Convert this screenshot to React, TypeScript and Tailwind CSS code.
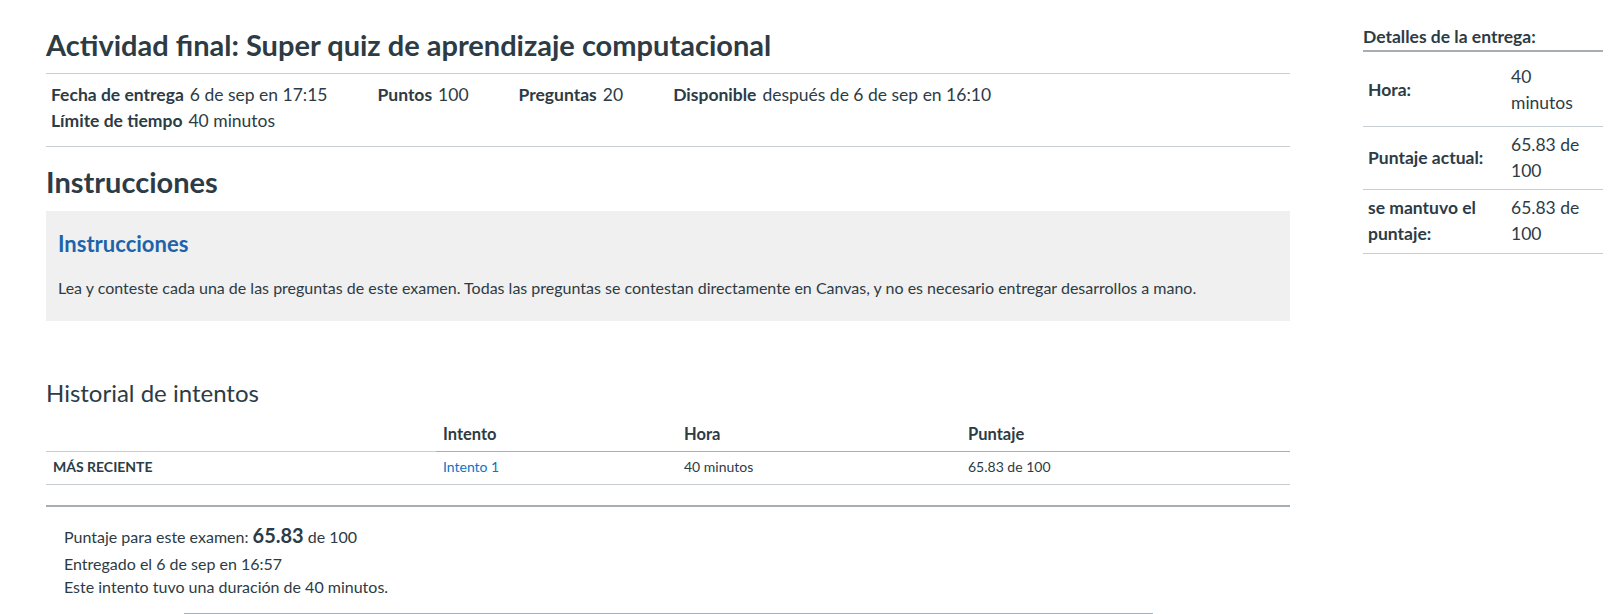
const meta = [
  { label: 'Fecha de entrega', value: '6 de sep en 17:15' },
  { label: 'Puntos', value: '100' },
  { label: 'Preguntas', value: '20' },
  { label: 'Disponible', value: 'después de 6 de sep en 16:10' },
];

const details = [
  { label: 'Hora:', value: '40 minutos', pad: 'pt-[12px] pb-[10px]' },
  { label: 'Puntaje actual:', value: '65.83 de 100', pad: 'py-[5px]' },
  { label: 'se mantuvo el puntaje:', value: '65.83 de 100', pad: 'pt-[5px] pb-[6px]' },
];

const App = () => {
  return (
    <div
      className="flex min-h-[614px] bg-white text-[#2d3b45]"
      style={{ fontFamily: 'Lato, "Noto Sans", sans-serif' }}
    >
      <div className="ml-[46px] w-[1244px] shrink-0">
        <h1 className="pt-[27px] text-[29px] font-bold leading-[35px] mb-[11px]">
          Actividad final: Super quiz de aprendizaje computacional
        </h1>
        <div className="border-t border-b border-[#c7cdd1] pl-[5px] pt-[8px] pb-[12px] text-[17.5px] leading-[26px]">
          <div className="flex gap-[50px]">
            {meta.map(m => (
              <div key={m.label}>
                <span className="font-bold mr-[6px]">{m.label}</span>
                {m.value}
              </div>
            ))}
          </div>
          <div>
            <span className="font-bold mr-[6px]">Límite de tiempo</span>
            40 minutos
          </div>
        </div>
        <h2 className="mt-[17px] text-[29px] font-bold leading-[35px] mb-[12px]">
          Instrucciones
        </h2>
        <div className="bg-[#f0f0f0] px-[12px] pt-[19px] pb-[21px]">
          <h3 className="text-[22px] font-bold leading-[28px] text-[#1e63a8]">
            Instrucciones
          </h3>
          <p className="mt-[18px] text-[16px] leading-[24px]">
            Lea y conteste cada una de las preguntas de este examen. Todas las
            preguntas se contestan directamente en Canvas, y no es necesario
            entregar desarrollos a mano.
          </p>
        </div>
        <h2 className="mt-[57px] text-[24px] leading-[30px]">Historial de intentos</h2>
        <table className="mt-[10px] w-full text-left">
          <thead>
            <tr className="text-[16.5px] font-bold">
              <th className="w-[390px] border-b border-[#c7cdd1]"></th>
              <th className="w-[241px] border-b border-[#a5afb5] px-[7px] py-[4px] leading-[22px]">
                Intento
              </th>
              <th className="w-[284px] border-b border-[#a5afb5] px-[7px] py-[4px]">Hora</th>
              <th className="border-b border-[#a5afb5] px-[7px] py-[4px]">Puntaje</th>
            </tr>
          </thead>
          <tbody>
            <tr className="text-[14px] leading-[20px]">
              <td className="border-b border-[#c7cdd1] px-[7px] pt-[5px] pb-[7px] font-bold uppercase">
                Más reciente
              </td>
              <td className="border-b border-[#c7cdd1] px-[7px] pt-[5px] pb-[7px] text-[#0b74c4]">
                Intento 1
              </td>
              <td className="border-b border-[#c7cdd1] px-[7px] pt-[5px] pb-[7px]">40 minutos</td>
              <td className="border-b border-[#c7cdd1] px-[7px] pt-[5px] pb-[7px]">65.83 de 100</td>
            </tr>
          </tbody>
        </table>
        <div className="mt-[20px] border-t-2 border-[#a5afb5] pl-[18px] pt-[13px] text-[16px] leading-[23.5px]">
          <div className="leading-[30px]">
            Puntaje para este examen: <span className="text-[20px] font-bold">65.83</span> de 100
          </div>
          <div>Entregado el 6 de sep en 16:57</div>
          <div>Este intento tuvo una duración de 40 minutos.</div>
          <div className="ml-[120px] mr-[137px] mt-[14px] border-t border-[#a5afb5]"></div>
        </div>
      </div>
      <div className="ml-[73px] w-[240px] shrink-0 pt-[25px]">
        <h3 className="text-[17.5px] font-bold leading-[24px] pb-[1px] border-b-2 border-[#a5afb5]">
          Detalles de la entrega:
        </h3>
        <table className="w-full text-[17.5px] leading-[26px]">
          <tbody>
            {details.map(d => (
              <tr key={d.label} className="border-b border-[#c7cdd1]">
                <th className={`w-[148px] pl-[5px] pr-[12px] text-left font-bold ${d.pad}`}>{d.label}</th>
                <td className={`pr-[10px] ${d.pad}`}>{d.value}</td>
              </tr>
            ))}
          </tbody>
        </table>
      </div>
    </div>
  );
};

export default App;
